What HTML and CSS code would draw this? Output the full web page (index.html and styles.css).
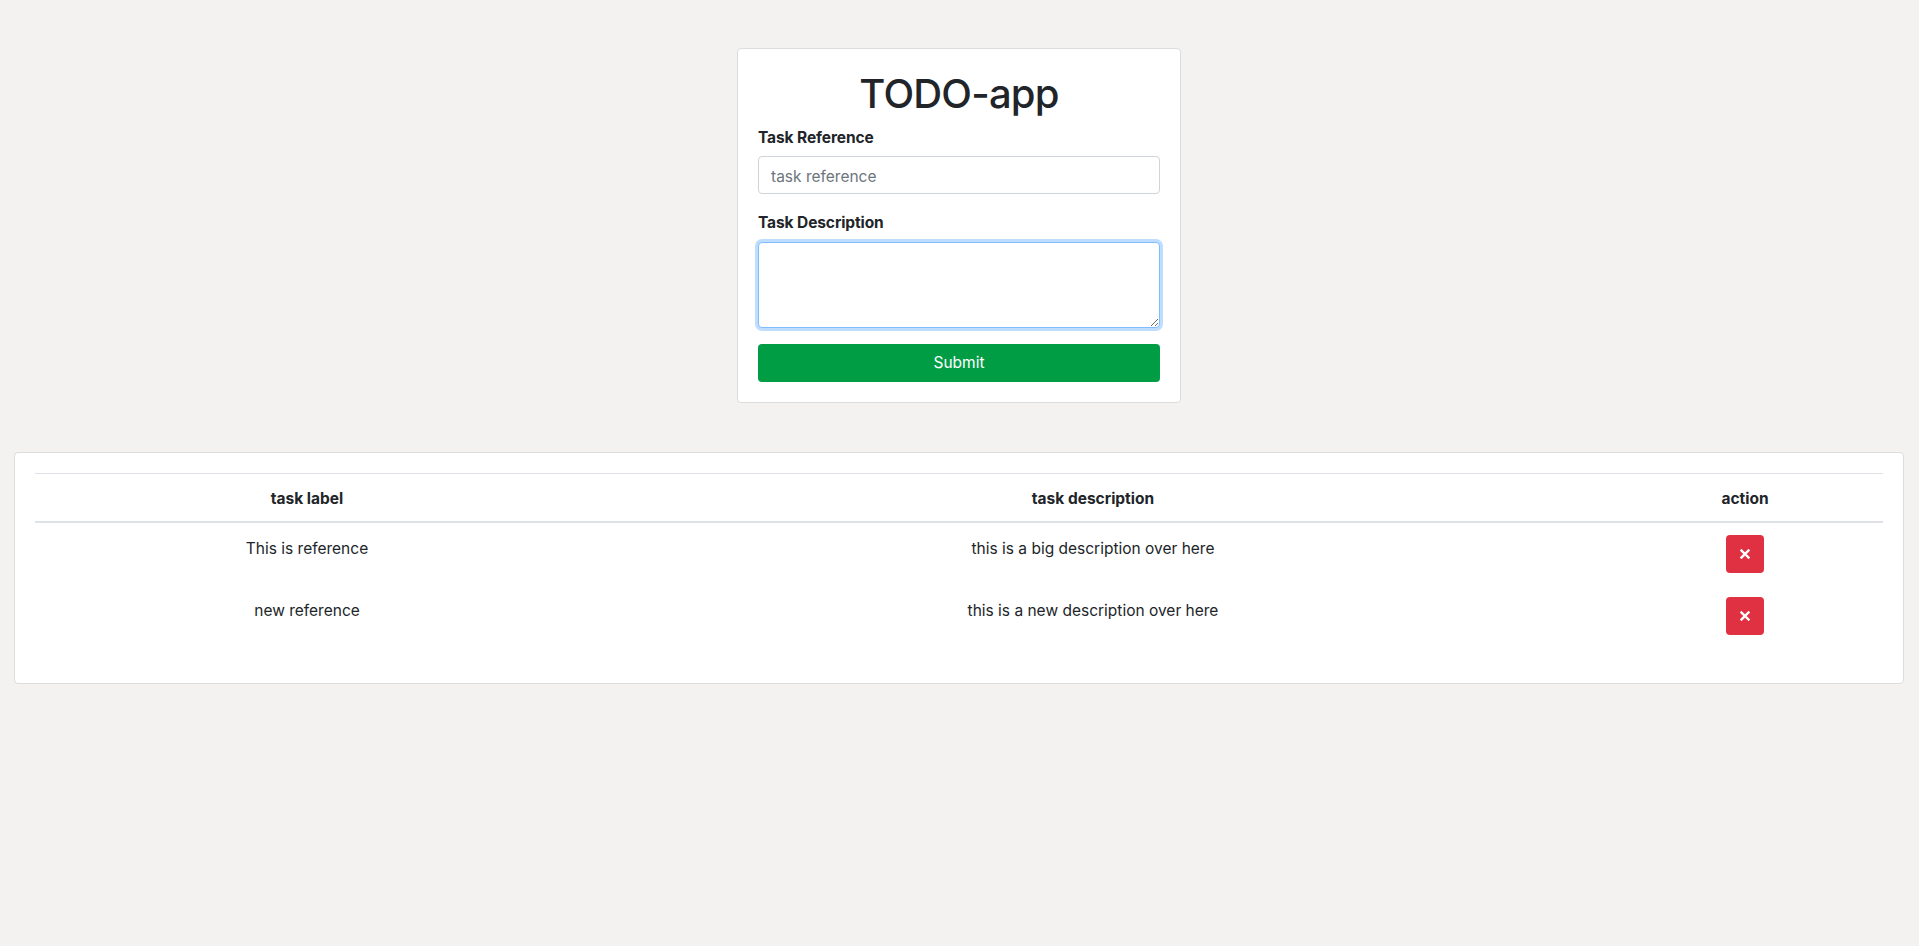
FILE: index.html
```html
<!DOCTYPE html>
<html lang="en">
<head>
<meta charset="utf-8">
<title>TODO-app</title>
<link rel="stylesheet" href="styles.css">
</head>
<body>
<main class="page">
  <section class="card form-card">
    <h1 class="title">TODO-app</h1>
    <div class="field">
      <label class="label" for="ref">Task Reference</label>
      <input class="input" id="ref" type="text" placeholder="task reference">
    </div>
    <div class="field">
      <label class="label" for="desc">Task Description</label>
      <textarea class="input textarea focused" id="desc" rows="3"></textarea>
    </div>
    <button class="btn-submit" type="button">Submit</button>
  </section>

  <section class="card table-card">
    <table class="table">
      <colgroup>
        <col class="col-label">
        <col class="col-desc">
        <col class="col-action">
      </colgroup>
      <thead>
        <tr><th>task label</th><th>task description</th><th>action</th></tr>
      </thead>
      <tbody>
        <tr>
          <td class="cell-text">This is reference</td>
          <td class="cell-text">this is a big description over here</td>
          <td class="cell-action"><button class="btn-delete" type="button" aria-label="delete"><svg viewBox="0 0 10 10" width="10" height="10"><path d="M1.5 1.5 L8.5 8.5 M8.5 1.5 L1.5 8.5" stroke="#fff" stroke-width="2.4" stroke-linecap="square"/></svg></button></td>
        </tr>
        <tr>
          <td class="cell-text">new reference</td>
          <td class="cell-text">this is a new description over here</td>
          <td class="cell-action"><button class="btn-delete" type="button" aria-label="delete"><svg viewBox="0 0 10 10" width="10" height="10"><path d="M1.5 1.5 L8.5 8.5 M8.5 1.5 L1.5 8.5" stroke="#fff" stroke-width="2.4" stroke-linecap="square"/></svg></button></td>
        </tr>
      </tbody>
    </table>
  </section>
</main>
</body>
</html>
```

FILE: styles.css
```css
* { box-sizing: border-box; }

html, body {
  margin: 0;
  padding: 0;
  background: #f3f2f0;
}

body {
  font-family: Inter, "Liberation Sans", Arial, sans-serif;
  font-size: 16px;
  line-height: 1.5;
  color: #212529;
}

.page {
  display: flex;
  flex-direction: column;
  align-items: center;
  padding: 48px 15px 0 14px;
  gap: 49px;
}

.card {
  background: #fff;
  border: 1px solid #dcdcdc;
  border-radius: 4px;
  padding: 20px;
}

.form-card {
  width: 444px;
}

.title {
  margin: 0 0 7px;
  padding-top: 1px;
  font-size: 40px;
  font-weight: 500;
  line-height: 1.2;
  text-align: center;
  letter-spacing: -0.8px;
}

.field {
  margin-bottom: 16px;
}

.label {
  display: block;
  margin-bottom: 7px;
  padding-top: 1px;
  font-weight: 700;
  font-size: 15.5px;
  letter-spacing: -0.1px;
}

.input {
  display: block;
  width: 100%;
  height: 38px;
  padding: 7px 12px 5px;
  font: inherit;
  font-size: 15.5px;
  color: #495057;
  background: #fff;
  border: 1px solid #ced4da;
  border-radius: 4px;
  outline: none;
}

.input::placeholder {
  color: #6c757d;
}

.textarea {
  height: 86px;
  resize: vertical;
}

.focused {
  border-color: #80bdff;
  box-shadow: 0 0 0 3px rgba(0, 123, 255, 0.25);
}

.btn-submit {
  display: block;
  width: 100%;
  height: 38px;
  padding-top: 2px;
  border: 0;
  border-radius: 4px;
  background: #009d45;
  color: #fff;
  font: inherit;
  font-size: 15.5px;
  cursor: pointer;
}

.table-card {
  width: 100%;
  padding: 20px 20px 36px;
}

.table {
  width: 100%;
  border-collapse: collapse;
  table-layout: fixed;
  font-size: 15.5px;
}

.col-label { width: 544px; }
.col-desc { width: 1028px; }
.col-action { width: 276px; }

.table th,
.table td {
  padding: 12px;
  text-align: center;
  vertical-align: top;
}

.table th {
  padding: 13px 12px 11px;
  font-weight: 700;
  border-top: 1px solid #dee2e6;
  border-bottom: 2px solid #dee2e6;
}

.table .cell-text {
  padding: 14px 12px 10px;
}

.btn-delete {
  display: inline-flex;
  align-items: center;
  justify-content: center;
  width: 38px;
  height: 38px;
  padding: 0;
  border: 0;
  border-radius: 4px;
  background: #e03143;
  vertical-align: top;
  cursor: pointer;
}
```
